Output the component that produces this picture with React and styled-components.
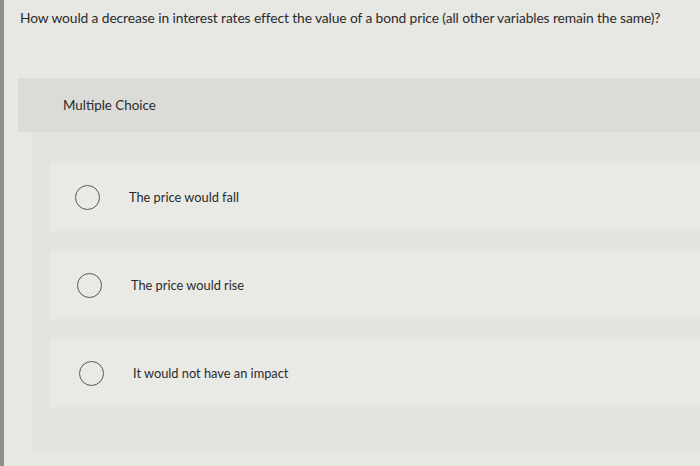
import styled, { createGlobalStyle } from "styled-components"

const Global = createGlobalStyle`
  body{
    margin:0;
    background:#e6e6e3;
    font-family:Lato, "Open Sans", "Liberation Sans", sans-serif;
    color:#2b2b2b;
  }
`

const Page = styled.div`
  min-height:466px;
  border-left:4px solid #8d8d8a;
  box-sizing:border-box;
  background:#e7e7e4;
`

const Question = styled.div`
  height:78px;
  box-sizing:border-box;
  padding:9px 0 0 16px;
  font-size:13.8px;
  letter-spacing:-0.1px;
`

const Header = styled.div`
  margin-left:14px;
  height:54px;
  display:flex;
  align-items:center;
  padding-left:45px;
  background:#dbdbd8;
  font-size:13.4px;
`

const Panel = styled.div`
  margin-left:28px;
  padding:31px 0 46px 18px;
  background:#e3e3e0;
  display:flex;
  flex-direction:column;
  gap:20px;
`

const Option = styled.label`
  height:68px;
  display:flex;
  align-items:center;
  padding-left:${p => p.$indent}px;
  background:#e9e9e6;
  font-size:12.8px;
  cursor:pointer;
`

const Radio = styled.span`
  width:23px;
  height:23px;
  border:1.6px solid #575755;
  border-radius:50%;
  margin-right:29px;
  flex-shrink:0;
`

const options = [
  {text:"The price would fall", indent:25},
  {text:"The price would rise", indent:27},
  {text:"It would not have an impact", indent:29},
]

const App = () => {
  return(
    <Page>
      <Global />
      <Question>
        How would a decrease in interest rates effect the value of a bond price (all other variables remain the same)?
      </Question>
      <Header>Multiple Choice</Header>
      <Panel>
        {
          options.map((option) => (
            <Option key={option.text} $indent={option.indent}>
              <Radio />
              {option.text}
            </Option>
          ))
        }
      </Panel>
    </Page>
  )
}
export default App
